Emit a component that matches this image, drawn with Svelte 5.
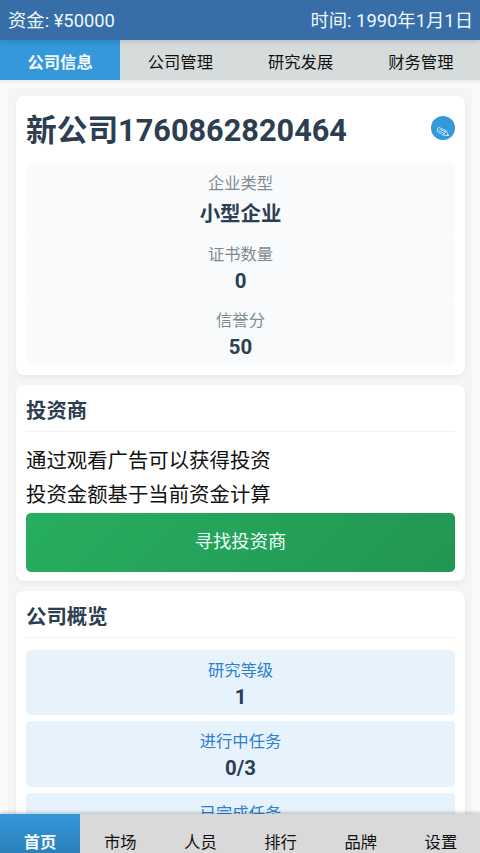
<script lang="ts">
  interface Stat {
    label: string;
    value: string;
  }

  const tabs = ["公司信息", "公司管理", "研究发展", "财务管理"];
  const navItems = ["首页", "市场", "人员", "排行", "品牌", "设置"];

  const companyStats: Stat[] = [
    { label: "企业类型", value: "小型企业" },
    { label: "证书数量", value: "0" },
    { label: "信誉分", value: "50" },
  ];

  const overview: Stat[] = [
    { label: "研究等级", value: "1" },
    { label: "进行中任务", value: "0/3" },
    { label: "已完成任务", value: "0" },
  ];

  let activeTab = $state(0);
  let activeNav = $state(0);
  let companyName = $state("新公司1760862820464");
</script>

<div class="app">
  <header class="top-bar">
    <span>资金: ¥50000</span>
    <span>时间: 1990年1月1日</span>
  </header>

  <nav class="tabs">
    {#each tabs as tab, i}
      <button class="tab" class:active={activeTab === i} onclick={() => (activeTab = i)}>{tab}</button>
    {/each}
  </nav>

  <main class="content">
    <div class="page">
      <section class="card company">
        <div class="company-header">
          <h1>{companyName}</h1>
          <button class="edit-btn" aria-label="编辑">
            <svg width="14" height="12" viewBox="0 0 14 12">
              <path
                d="M1.4 3.8 C1 2.6 1.9 1.4 3.2 1.5 L10.3 4.8 L12.7 9.6 L7.6 9.3 L2 6 Z M2.4 4.3 L8.4 7.5 M3.5 2.8 L9.6 6 M10.3 4.8 L8.4 7.5 L7.6 9.3"
                fill="none"
                stroke="#d9efff"
                stroke-width="0.8"
                stroke-linejoin="round"
              />
              <path d="M11.4 8 L12.9 9.8 L10.6 9.5 Z" fill="#e6f5ff" />
            </svg>
          </button>
        </div>
        <div class="stats">
          {#each companyStats as stat, i}
            <div class="stat" class:tall={i === 0}>
              <span class="label">{stat.label}</span>
              <span class="value">{stat.value}</span>
            </div>
          {/each}
        </div>
      </section>

      <section class="card investor">
        <h2>投资商</h2>
        <p>通过观看广告可以获得投资</p>
        <p>投资金额基于当前资金计算</p>
        <button class="find-btn">寻找投资商</button>
      </section>

      <section class="card overview">
        <h2>公司概览</h2>
        <div class="overview-list">
          {#each overview as item}
            <div class="stat blue">
              <span class="label">{item.label}</span>
              <span class="value">{item.value}</span>
            </div>
          {/each}
        </div>
      </section>
    </div>
  </main>

  <nav class="bottom-nav">
    {#each navItems as item, i}
      <button class="nav-item" class:active={activeNav === i} onclick={() => (activeNav = i)}>{item}</button>
    {/each}
  </nav>
</div>

<style>
  :global(body) {
    margin: 0;
    overflow: hidden;
  }

  .app {
    display: flex;
    flex-direction: column;
    height: 100vh;
    overflow: hidden;
    background: #f9fafc;
    color: #111;
    font-family: Roboto, "Noto Sans CJK SC", sans-serif;
  }

  button {
    border: none;
    margin: 0;
    padding: 0;
    font-family: inherit;
    cursor: pointer;
  }

  .top-bar {
    display: flex;
    justify-content: space-between;
    box-sizing: border-box;
    flex: 0 0 40px;
    min-height: 0;
    padding: 1px 7px 0 8px;
    background: #376ea8;
    color: #edf6ff;
    font-size: 18.35px;
    line-height: 39px;
    box-shadow: 0 2px 5px rgba(0, 0, 0, 0.12);
    z-index: 2;
  }

  .tabs {
    display: grid;
    grid-template-columns: repeat(4, 1fr);
    flex: 0 0 40px;
    margin-right: -1px;
    background: #d5dcdb;
    box-shadow: 0 1px 4px rgba(0, 0, 0, 0.1);
    z-index: 1;
  }

  .tab {
    padding-top: 5px;
    background: transparent;
    color: #111;
    font-size: 16.3px;
    line-height: 35px;
  }

  .tab.active {
    background: #3498db;
    color: #f2faff;
    font-weight: 700;
  }

  .content {
    flex: 1;
    min-height: 0;
    padding: 8px 8px 0;
    overflow: hidden;
  }

  .page {
    padding: 8px 7px 0 8px;
    background: #f5f5f5;
  }

  .card {
    box-sizing: border-box;
    margin-bottom: 10px;
    padding: 10px;
    border-radius: 8px;
    background: #fff;
    box-shadow: 0 2px 5px rgba(0, 0, 0, 0.06);
  }

  .company-header {
    display: flex;
    justify-content: space-between;
    align-items: center;
    height: 45px;
    margin-bottom: 12px;
  }

  h1 {
    margin: 0 0 -3px;
    color: #2c3e50;
    font-size: 30.7px;
    font-weight: 700;
    line-height: 45px;
  }

  .edit-btn {
    display: flex;
    align-items: center;
    justify-content: center;
    width: 24px;
    height: 24px;
    margin-bottom: 1px;
    padding-top: 8px;
    border-radius: 50%;
    background: #3498db;
    box-sizing: border-box;
  }

  .stat {
    display: flex;
    flex-direction: column;
    align-items: center;
    box-sizing: border-box;
    height: 65.5px;
    padding-top: 7px;
    border-radius: 5px;
    background: #f9fafc;
  }

  .stat.tall {
    height: 71px;
  }

  .label {
    color: #7f8c8d;
    font-size: 16.3px;
    line-height: 28px;
  }

  .value {
    color: #2c3e50;
    font-size: 20.4px;
    font-weight: 700;
    line-height: 24px;
  }

  .tall .value {
    line-height: 33px;
  }

  h2 {
    margin: 0 0 12px;
    padding: 1px 0 5px;
    border-bottom: 1px solid #f0f1f2;
    color: #2c3e50;
    font-size: 20.4px;
    font-weight: 700;
    line-height: 30px;
  }

  .investor {
    height: 196.4px;
  }

  p {
    margin: 0;
    color: #111;
    font-size: 20.4px;
    line-height: 34.3px;
  }

  .find-btn {
    display: block;
    width: 100%;
    height: 59.5px;
    padding-bottom: 4px;
    border-radius: 5px;
    background: linear-gradient(135deg, #27ae60, #219653);
    color: #eefff5;
    font-size: 18.3px;
  }

  .overview h2 {
    margin-bottom: 11.3px;
  }

  .overview-list {
    display: flex;
    flex-direction: column;
    gap: 6.3px;
  }

  .stat.blue {
    background: #e6f3fd;
  }

  .blue .label {
    color: #2f80ce;
  }

  .bottom-nav {
    display: grid;
    grid-template-columns: repeat(6, 1fr);
    flex: 0 0 39px;
    margin-right: -1px;
    background: #d9d9d9;
    box-shadow: 0 -1px 4px rgba(0, 0, 0, 0.25);
    z-index: 1;
  }

  .nav-item {
    padding-top: 18px;
    background: transparent;
    color: #111;
    font-size: 16.3px;
    line-height: 21px;
  }

  .nav-item.active {
    background: linear-gradient(#3497da, #2b80b9);
    color: #f2faff;
    font-weight: 700;
  }
</style>
